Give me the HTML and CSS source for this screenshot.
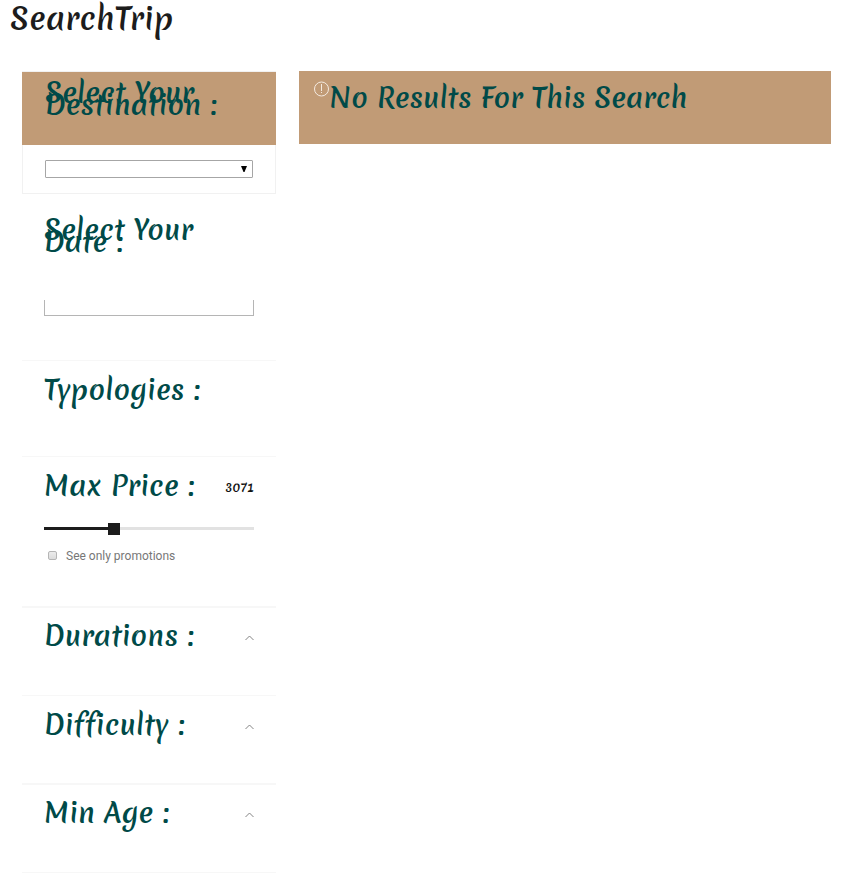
FILE: index.html
```html
<!DOCTYPE html>
<html lang="en">
<head>
<meta charset="utf-8">
<title>SearchTrip</title>
<link rel="stylesheet" href="styles.css">
</head>
<body>
<h1 class="page-title">SearchTrip</h1>
<main class="layout">
  <aside class="filters">
    <section class="destination">
      <div class="destination-head"><h2>Select Your<br>Destination :</h2></div>
      <div class="destination-body"><div class="select"><svg width="6" height="6" viewBox="0 0 6 6"><path d="M0 0H6L3.5 6H2.5Z"/></svg></div></div>
    </section>
    <section class="panel date">
      <h2>Select Your<br>Date :</h2>
      <div class="date-input"></div>
    </section>
    <section class="panel typologies"><h2>Typologies :</h2></section>
    <section class="panel price">
      <div class="row"><h2>Max Price :</h2><output class="amount">3071</output></div>
      <div class="slider"><div class="slider-fill"></div><div class="slider-thumb"></div><div class="slider-rest"></div></div>
      <div class="promo"><span class="checkbox"></span><span>See only promotions</span></div>
    </section>
    <section class="panel durations"><div class="row"><h2>Durations :</h2><svg class="chevron" width="9" height="6" viewBox="0 0 9 6"><path d="M.5 5L4.5 1L8.5 5"/></svg></div></section>
    <section class="panel difficulty"><div class="row"><h2>Difficulty :</h2><svg class="chevron" width="9" height="6" viewBox="0 0 9 6"><path d="M.5 5L4.5 1L8.5 5"/></svg></div></section>
    <section class="panel age"><div class="row"><h2>Min Age :</h2><svg class="chevron" width="9" height="6" viewBox="0 0 9 6"><path d="M.5 5L4.5 1L8.5 5"/></svg></div></section>
  </aside>
  <section class="results">
    <svg class="alert" width="15" height="16" viewBox="0 0 15 16"><circle cx="7.5" cy="8" r="7"/><path d="M7.5 3V10M7.5 11V12"/></svg>
    <h2>No Results For This Search</h2>
  </section>
</main>
</body>
</html>
```
FILE: styles.css
```css
* { box-sizing: border-box; }
body { margin: 0; background: #fff; font-family: Roboto, sans-serif; }
h1, h2 { margin: 0; font-family: Merienda, Lato, sans-serif; font-weight: 600; white-space: nowrap; }
h1 { color: #1c1c1c; }
h2 { color: #004a48; font-size: 27px; line-height: 12px; }
svg { display: block; }
.page-title { height: 71px; padding: 0 0 0 10px; font-size: 30px; line-height: 37px; letter-spacing: .3px; }
.layout { display: flex; align-items: flex-start; gap: 23px; padding-left: 22px; }
.filters { width: 254px; }
.filters h2 { letter-spacing: .15px; }
.destination { height: 123px; border: 1px solid #f1f1f1; }
.destination-head { height: 73px; margin: 0 -1px; padding: 15px 0 0 23px; background: #c19b76; }
.destination-body { padding: 15px 22px; }
.select { height: 18px; display: flex; align-items: center; justify-content: flex-end; padding-right: 5px; border: 1px solid #a6a6a6; border-radius: 1px; }
.panel { padding: 23px 22px 0; border-bottom: 1px solid #f7f7f7; }
.date { height: 167px; padding-top: 30px; }
.date-input { height: 16px; margin-top: 52px; border: 1px solid #b5b5b5; border-top: 0; }
.typologies { height: 96px; }
.price { height: 151px; border-bottom-width: 2px; }
.durations { height: 88px; padding-top: 22px; }
.difficulty { height: 89px; border-bottom-width: 2px; }
.age { height: 88px; padding-top: 22px; }
.row { display: flex; justify-content: space-between; height: 12px; }
.amount { margin-top: 2px; color: #111; font: 600 12px/12px Merienda, Lato, sans-serif; letter-spacing: .4px; }
.slider { display: flex; align-items: center; height: 12px; margin-top: 31px; }
.slider-fill { width: 64px; height: 3px; margin-top: -1px; background: #1c1c1c; }
.slider-thumb { width: 12px; height: 12px; background: #1c1c1c; }
.slider-rest { flex: 1; height: 3px; margin-top: -1px; background: #e2e2e2; }
.promo { display: flex; align-items: center; gap: 9px; height: 14px; margin: 14px 0 0 4px; color: #777; font-size: 12px; line-height: 14px; white-space: nowrap; }
.checkbox { width: 9px; height: 9px; margin-top: -1px; border: 1px solid #b5b5b5; border-radius: 2px; background: linear-gradient(#ececec, #dcdcdc); }
.chevron { margin-top: 5px; fill: none; stroke: #777; stroke-width: .9; }
.results { display: flex; width: 532px; height: 73px; padding: 10px 0 0 15px; background: #c19b76; }
.results h2 { margin-top: 11px; }
.alert { fill: none; stroke: #f4eae0; stroke-width: 1; }
```
